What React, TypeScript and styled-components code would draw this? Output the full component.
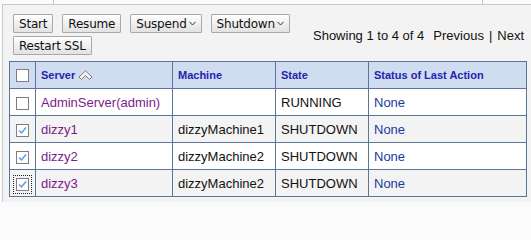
import React from 'react';
import styled, {createGlobalStyle} from 'styled-components';

const GlobalStyle = createGlobalStyle`
  html, body {
    margin: 0;
    padding: 0;
    background: #fbfbfb;
  }
`;

const Page = styled.div`
  width: 531px;
  height: 202px;
  overflow: hidden;
  position: relative;
  padding-top: 4px;
  box-sizing: border-box;
`;

const Tick = styled.span<{left: number}>`
  position: absolute;
  top: 0;
  left: ${p => p.left}px;
  width: 1px;
  height: 4px;
  background: #c8c8c8;
`;

const Panel = styled.div`
  margin-left: 2px;
  border-top: 1px solid #cacaca;
  border-left: 1px solid #cacaca;
  background: #f3f3f3;
  height: 100%;
  padding: 9px 5px 0 6px;
  box-sizing: border-box;
`;

const Toolbar = styled.div`
  display: flex;
  align-items: center;
  padding-left: 4px;
  padding-right: 2px;
`;

const Buttons = styled.div`
  flex: 1;
  display: flex;
  flex-wrap: wrap;
  gap: 3px 9px;
`;

const Button = styled.button`
  height: 19px;
  padding: 0 5px;
  border: 1px solid #a9a9a9;
  border-radius: 1px;
  background: linear-gradient(#fefefe, #e2e2e2);
  font-family: 'DejaVu Sans', sans-serif;
  font-size: 12px;
  letter-spacing: -0.2px;
  color: #111;
  display: inline-flex;
  align-items: center;
  gap: 2px;
  box-sizing: border-box;
`;

const Caret = () => (
  <svg width="7" height="5" viewBox="0 0 7 5">
    <polyline points="0.5,0.8 3.5,4 6.5,0.8" fill="none" stroke="#333" strokeWidth="1" />
  </svg>
);

const Pager = styled.div`
  font-family: 'Liberation Sans', Arial, sans-serif;
  font-size: 13px;
  color: #111;
  white-space: nowrap;
  display: flex;
  gap: 5px;
  margin-top: 2px;
`;

const PagerSep = styled.span`
  margin-left: 4px;
`;

const Grid = styled.table`
  margin-top: 6px;
  border-collapse: collapse;
  width: 517px;
  table-layout: fixed;
  font-family: 'Liberation Sans', Arial, sans-serif;
  font-size: 13px;
  color: #111;
`;

const Head = styled.th`
  background: #d0dcef;
  border: 1px solid #5a7598;
  height: 26px;
  padding: 0 5px;
  text-align: left;
  font-size: 11px;
  font-weight: bold;
  color: #2424b0;
  white-space: nowrap;
`;

const BoxHead = styled(Head)`
  padding: 0;
  text-align: center;
`;

const Row = styled.tr<{shaded: boolean}>`
  background: ${p => (p.shaded ? '#f3f3f3' : '#ffffff')};
`;

const Cell = styled.td`
  border: 1px solid #5a7598;
  height: 26px;
  padding: 0 5px;
  white-space: nowrap;
`;

const BoxCell = styled(Cell)`
  padding: 0;
  text-align: center;
`;

const Link = styled.span<{tone: 'visited' | 'plain'}>`
  color: ${p => (p.tone === 'visited' ? '#7d1a8c' : '#1b3aa0')};
`;

const Box = styled.span<{focused?: boolean}>`
  display: inline-flex;
  width: 13px;
  height: 13px;
  box-sizing: border-box;
  border: 1px solid #7d7d7d;
  background: #fff;
  vertical-align: middle;
  align-items: center;
  justify-content: center;
  outline: ${p => (p.focused ? '1px dotted #222' : 'none')};
  outline-offset: 2px;
`;

const Check = ({on, focused}: {on: boolean; focused?: boolean}) => (
  <Box focused={focused}>
    {on && (
      <svg width="9" height="9" viewBox="0 0 9 9">
        <polyline points="1,4.5 3.5,7 8,1.5" fill="none" stroke="#5a9be6" strokeWidth="1.5" />
      </svg>
    )}
  </Box>
);

const SortIcon = styled.svg`
  margin-left: 3px;
`;

const HeadLabel = styled.span`
  display: inline-flex;
  align-items: center;
`;

const servers = [
  {name: 'AdminServer(admin)', machine: '', state: 'RUNNING', on: false},
  {name: 'dizzy1', machine: 'dizzyMachine1', state: 'SHUTDOWN', on: true},
  {name: 'dizzy2', machine: 'dizzyMachine2', state: 'SHUTDOWN', on: true},
  {name: 'dizzy3', machine: 'dizzyMachine2', state: 'SHUTDOWN', on: true, focused: true},
];

const App: React.FC = () => {
  return (
    <Page>
      <GlobalStyle />
      <Tick left={53} />
      <Tick left={482} />
      <Panel>
        <Toolbar>
          <Buttons>
            <Button>Start</Button>
            <Button>Resume</Button>
            <Button>Suspend<Caret /></Button>
            <Button>Shutdown<Caret /></Button>
            <Button>Restart SSL</Button>
          </Buttons>
          <Pager>
            <span>Showing 1 to 4 of 4</span>
            <PagerSep>Previous</PagerSep>
            <span>|</span>
            <span>Next</span>
          </Pager>
        </Toolbar>
        <Grid>
          <colgroup>
            <col style={{width: 26}} />
            <col style={{width: 137}} />
            <col style={{width: 103}} />
            <col style={{width: 93}} />
            <col style={{width: 158}} />
          </colgroup>
          <thead>
            <tr>
              <BoxHead>
                <Check on={false} />
              </BoxHead>
              <Head>
                <HeadLabel>
                  Server
                  <SortIcon width="15" height="11" viewBox="0 0 15 11">
                    <path d="M1 7 L7.5 0.8 L14 7 L11.5 9.5 L7.5 5.6 L3.5 9.5 Z" fill="#f4f4f4" stroke="#7a7a7a" strokeWidth="1" />
                  </SortIcon>
                </HeadLabel>
              </Head>
              <Head>Machine</Head>
              <Head>State</Head>
              <Head>Status of Last Action</Head>
            </tr>
          </thead>
          <tbody>
            {servers.map((s, i) => (
              <Row key={s.name} shaded={i % 2 === 1}>
                <BoxCell>
                  <Check on={s.on} focused={s.focused} />
                </BoxCell>
                <Cell>
                  <Link tone="visited">{s.name}</Link>
                </Cell>
                <Cell>{s.machine}</Cell>
                <Cell>{s.state}</Cell>
                <Cell>
                  <Link tone="plain">None</Link>
                </Cell>
              </Row>
            ))}
          </tbody>
        </Grid>
      </Panel>
    </Page>
  );
};

export default App;
